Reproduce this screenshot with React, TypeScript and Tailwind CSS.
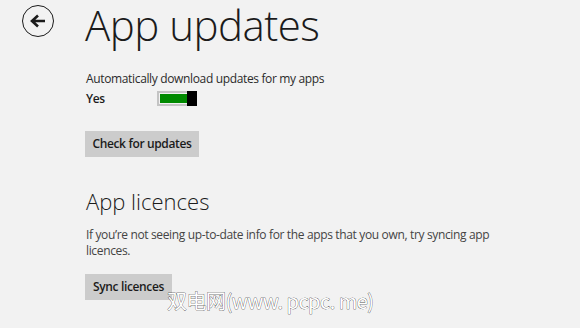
import React from 'react';

export default function App() {
    return (
        <div className="relative w-[580px] h-[328px] overflow-hidden bg-[#f2f2f2] text-[#1b1b1b] font-['Open_Sans',sans-serif]">
            <div className="flex items-start">
                <button className="mt-[5px] ml-[22px] w-[32px] h-[32px] rounded-full border-[1.5px] border-[#1b1b1b] flex items-center justify-center">
                    <svg width="18" height="16" viewBox="0 0 18 16">
                        <path d="M16 8H4M9 2.5L3 8l6 5.5" fill="none" stroke="#1b1b1b" strokeWidth="2.6" />
                    </svg>
                </button>
                <h1 className="ml-[31px] mt-[1px] text-[42px] font-light tracking-[-0.5px] leading-[48px]">App updates</h1>
            </div>

            <div className="pl-[86px] pt-[21px] text-[12px] tracking-[-0.35px]">
                <p className="leading-[17px] text-[#2b2b2b]">Automatically download updates for my apps</p>
                <div className="flex items-center mt-[3px] h-[17px]">
                    <span className="w-[71px] font-semibold">Yes</span>
                    <div className="flex h-[15px] w-[40px] border-[2px] border-[#c4c4c4] border-r-0">
                        <div className="flex-1 border-[1px] border-[#f2f2f2] border-r-0 bg-[#008a00]" />
                        <div className="w-[10px] h-[15px] mt-[-2px] bg-black" />
                    </div>
                </div>

                <button className="mt-[24px] h-[26px] w-[114px] ml-[-1px] bg-[#cccccc] font-semibold text-[#1b1b1b] flex items-center justify-center">
                    Check for updates
                </button>

                <h2 className="mt-[29px] text-[22px] tracking-normal font-light leading-[30px]">App licences</h2>
                <p className="mt-[11px] leading-[16px] text-[#444] w-[412px]">
                    If you’re not seeing up-to-date info for the apps that you own, try syncing app licences.
                </p>
                <button className="mt-[15px] h-[26px] w-[87px] ml-[-1px] bg-[#cccccc] font-semibold text-[#1b1b1b] flex items-center justify-center">
                    Sync licences
                </button>
            </div>

            <div className="absolute left-[167px] top-[290px] text-[20px] leading-[22px] text-white font-['Noto_Sans_CJK_SC',sans-serif] tracking-[-0.5px] [-webkit-text-stroke:0.5px_black] [paint-order:stroke_fill]">
                双电网(www. pcpc. me)
            </div>
        </div>
    );
}
